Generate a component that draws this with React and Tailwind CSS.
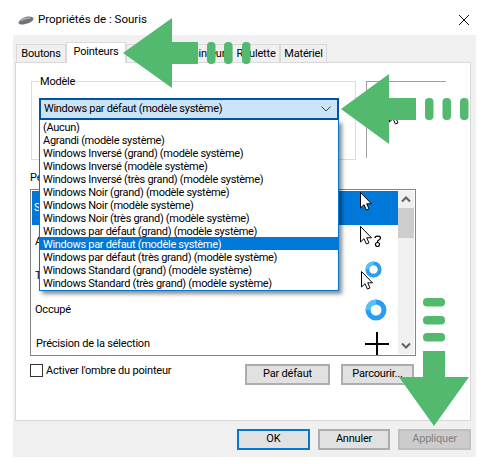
const models = [
  "(Aucun)",
  "Agrandi (modèle système)",
  "Windows Inversé (grand) (modèle système)",
  "Windows Inversé (modèle système)",
  "Windows Inversé (très grand) (modèle système)",
  "Windows Noir (grand) (modèle système)",
  "Windows Noir (modèle système)",
  "Windows Noir (très grand) (modèle système)",
  "Windows par défaut (grand) (modèle système)",
  "Windows par défaut (modèle système)",
  "Windows par défaut (très grand) (modèle système)",
  "Windows Standard (grand) (modèle système)",
  "Windows Standard (très grand) (modèle système)",
];

function MouseIcon() {
  return (
    <svg width="16" height="9" viewBox="0 0 16 9">
      <path d="M0.500 6.500 C2 3 7 0.500 11 0.500 C14 0.500 15.800 1.500 15.500 3 C15 6 8 8.500 4 8.500 C2 8.500 0.500 8 0.500 6.500Z" fill="#6f7377" />
      <path d="M3 5 C5 3 9 2 12.500 2" stroke="#a9adb1" strokeWidth="1.500" fill="none" />
    </svg>
  );
}

function Cursor({ x = 0, y = 0 }) {
  return (
    <path
      transform={`translate(${x} ${y})`}
      d="M0.500 0.500 V16 L4 12.700 L6.400 18 L9 16.900 L6.700 11.800 H11.500 Z"
      fill="#fff"
      stroke="#000"
      strokeWidth="1"
      strokeLinejoin="round"
    />
  );
}

function Ring({ size = 22 }) {
  return (
    <svg width={size} height={size} viewBox="0 0 22 22">
      <circle cx="11" cy="11" r="8" fill="none" stroke="#2b9bf4" strokeWidth="5" />
      <path d="M3 11 A8 8 0 0 1 11 3" fill="none" stroke="#55c3f8" strokeWidth="5" />
    </svg>
  );
}

function Tab({ active, children, className }) {
  return (
    <div
      className={`flex items-center justify-center border-x border-t border-[#d9d9d9] text-black ${
        active ? "h-[21px] bg-white pb-[1px] z-10 -mb-px" : "h-[18px] pt-[2px] bg-[#f0f0f0]"
      } ${className}`}
    >
      {children}
    </div>
  );
}

function Button({ children, className }) {
  return (
    <div className={`flex items-center justify-center border-2 ${className}`}>
      {children}
    </div>
  );
}

export default function App() {
  return (
    <div className="relative w-[490px] h-[464px] overflow-hidden bg-white text-black font-['Roboto',sans-serif] text-[11px] tracking-[-0.2px]">
      {/* Title */}
      <div className="h-[35px] flex items-center pl-[18px] pr-[20px] pt-[5px]">
        <MouseIcon />
        <span className="ml-[4px] flex-1 text-[11.5px] tracking-normal">Propriétés de : Souris</span>
        <svg width="12" height="12" viewBox="0 0 12 12" className="mb-[1px]">
          <path d="M1 1 L11 11 M11 1 L1 11" stroke="#111" strokeWidth="1" />
        </svg>
      </div>

      {/* Dialog body */}
      <div className="ml-[13px] w-[463px] h-[422px] bg-[#f0f0f0] pl-[2px] pr-[5px] pt-[7px] flex flex-col">
        <div className="flex items-end h-[20px] pl-px">
          <Tab className="w-[50px]">Boutons</Tab>
          <Tab active className="w-[60px]">Pointeurs</Tab>
          <Tab className="w-[106px]">Options du pointeur</Tab>
          <Tab className="w-[48px]">Roulette</Tab>
          <Tab className="w-[47px]">Matériel</Tab>
        </div>

        {/* Tab panel */}
        <div className="relative w-[456px] h-[359px] bg-white border border-[#d9d9d9] pl-[14px] pt-[18px]">
          <div className="flex">
            <div className="relative ml-px w-[325px] h-[79px] border border-[#dcdcdc] shrink-0">
              <span className="absolute left-[7px] -top-[9px] bg-white px-px leading-[18px]">Modèle</span>
            </div>
            <div className="relative ml-[10px] w-[80px] h-[77px] border-l border-t border-[#a0a0a0] shrink-0">
              <svg width="13" height="20" viewBox="0 0 13 20" className="absolute left-[22px] top-[24px]"><Cursor /></svg>
            </div>
          </div>

          <div className="mt-[8px] h-[19px] leading-[19px]">Personnaliser :</div>

          {/* Pointer list */}
          <div className="mt-[2px] w-[386px] h-[167px] border border-[#82838b] flex">
            <div className="flex-1 min-w-0 flex flex-col pl-px pt-px overflow-hidden">
              <div className="h-[34px] shrink-0 bg-[#0078d7] flex items-center justify-end pr-[25px] text-white pl-[2px]">
                <span className="mr-auto">Sélection normale</span>
                <svg width="13" height="20" viewBox="0 0 13 20" className="mb-[12px]"><Cursor /></svg>
              </div>
              <div className="h-[34px] shrink-0 flex items-center justify-end pr-[14px] pl-[3px]">
                <span className="mr-auto">Aide</span>
                <svg width="24" height="21" viewBox="0 0 24 21" className="mb-[12px]">
                  <Cursor />
                  <path d="M15 12 C15 9.500 20.500 9.500 20.500 12 C20.500 14 17 14 17.500 16 M15.500 18.500 A2 2 0 1 0 19.500 18.500 A2 2 0 1 0 15.500 18.500" fill="none" stroke="#000" strokeWidth="1.200" />
                </svg>
              </div>
              <div className="h-[34px] shrink-0 flex items-center pl-[3px] relative">
                <span>Travail en arrière-plan</span>
                <div className="absolute left-[329px] top-[12px]">
                  <svg width="13" height="20" viewBox="0 0 13 20"><Cursor /></svg>
                </div>
                <div className="absolute left-[333px] top-[2px]"><Ring size={17} /></div>
              </div>
              <div className="h-[34px] shrink-0 flex items-center justify-end pr-[11px] pl-[3px]">
                <span className="mr-auto">Occupé</span>
                <Ring />
              </div>
              <div className="h-[34px] shrink-0 flex items-center justify-end pr-[9px] pl-[4px]">
                <span className="mr-auto">Précision de la sélection</span>
                <svg width="24" height="24" viewBox="0 0 24 24">
                  <path d="M12 0 V24 M0 12 H24" stroke="#000" strokeWidth="2" />
                </svg>
              </div>
            </div>

            {/* Scrollbar */}
            <div className="w-[17px] py-px pr-px">
              <div className="h-full bg-[#f0f0f0] flex flex-col">
                <svg width="16" height="17" viewBox="0 0 16 17" className="shrink-0">
                  <path d="M4 10.500 L8 6.500 L12 10.500" fill="none" stroke="#606060" strokeWidth="2" />
                </svg>
                <div className="w-full h-[30px] bg-[#cdcdcd]" />
                <div className="flex-1" />
                <svg width="16" height="17" viewBox="0 0 16 17" className="shrink-0">
                  <path d="M4 6.500 L8 10.500 L12 6.500" fill="none" stroke="#606060" strokeWidth="2" />
                </svg>
              </div>
            </div>
          </div>

          <div className="mt-[8px] flex items-start w-[386px]">
            <div className="flex items-center gap-[3px] mr-auto h-[13px]">
              <div className="w-[13px] h-[13px] border border-[#333] bg-white" />
              <span className="pt-px">Activer l'ombre du pointeur</span>
            </div>
            <Button className="w-[85px] h-[21px] bg-[#e1e1e1] border-[#adadad] mr-[11px]">Par défaut</Button>
            <Button className="w-[73px] h-[21px] bg-[#e1e1e1] border-[#adadad] mr-[2px]">Parcourir...</Button>
          </div>

          {/* Open dropdown */}
          <div className="absolute left-[23px] top-[35px] w-[300px] z-10 tracking-[-0.3px]">
            <div className="h-[22px] border-2 border-[#0054a6] bg-[#cce4f7] flex items-center justify-between pl-[3px] pr-[6px]">
              <span>Windows par défaut (modèle système)</span>
              <svg width="10" height="6" viewBox="0 0 10 6">
                <path d="M0.500 0.500 L5 5 L9.500 0.500" fill="none" stroke="#444" strokeWidth="1" />
              </svg>
            </div>
            <div className="h-[171px] border border-[#0078d7] border-t-0 bg-white shadow-[3px_3px_4px_rgba(0,0,0,0.45)]">
              {models.map((m, i) => (
                <div
                  key={m}
                  className={`h-[13px] leading-[15px] pl-[3px] whitespace-nowrap ${
                    i === 9 ? "bg-[#0078d7] text-white" : ""
                  }`}
                >
                  {m}
                </div>
              ))}
            </div>
          </div>
        </div>

        {/* Bottom buttons */}
        <div className="flex mt-[8px] pl-[222px] gap-[8px]">
          <Button className="w-[73px] h-[21px] bg-[#e1e1e1] border-[#0078d7]">OK</Button>
          <Button className="w-[73px] h-[21px] bg-[#e1e1e1] border-[#adadad]">Annuler</Button>
          <Button className="w-[73px] h-[21px] bg-[#cccccc] border-[#bfbfbf] text-[#838383]">Appliquer</Button>
        </div>
      </div>

      {/* Green annotation arrows */}
      <svg width="490" height="464" viewBox="0 0 490 464" className="absolute left-0 top-0 z-20 pointer-events-none">
        <g fill="#52b96f">
          <path d="M123 53 L172 18 V42 H198 V64 H172 V88 Z" />
          <rect x="207" y="42" width="8.500" height="22" rx="4" />
          <rect x="224" y="42" width="8.500" height="22" rx="4" />
          <rect x="242" y="42" width="8.500" height="22" rx="4" />

          <path d="M341 109 L389 74 V98 H416 V120 H389 V144 Z" />
          <rect x="425" y="98" width="8.500" height="22" rx="4" />
          <rect x="442.500" y="98" width="8.500" height="22" rx="4" />
          <rect x="460" y="98" width="8.500" height="22" rx="4" />

          <rect x="423" y="298" width="22" height="8.500" rx="4" />
          <rect x="423" y="316" width="22" height="8.500" rx="4" />
          <rect x="423" y="333" width="22" height="8.500" rx="4" />
          <path d="M423 351 H445 V377 H469 L434 426 L399 377 H423 Z" />
        </g>
      </svg>
    </div>
  );
}
